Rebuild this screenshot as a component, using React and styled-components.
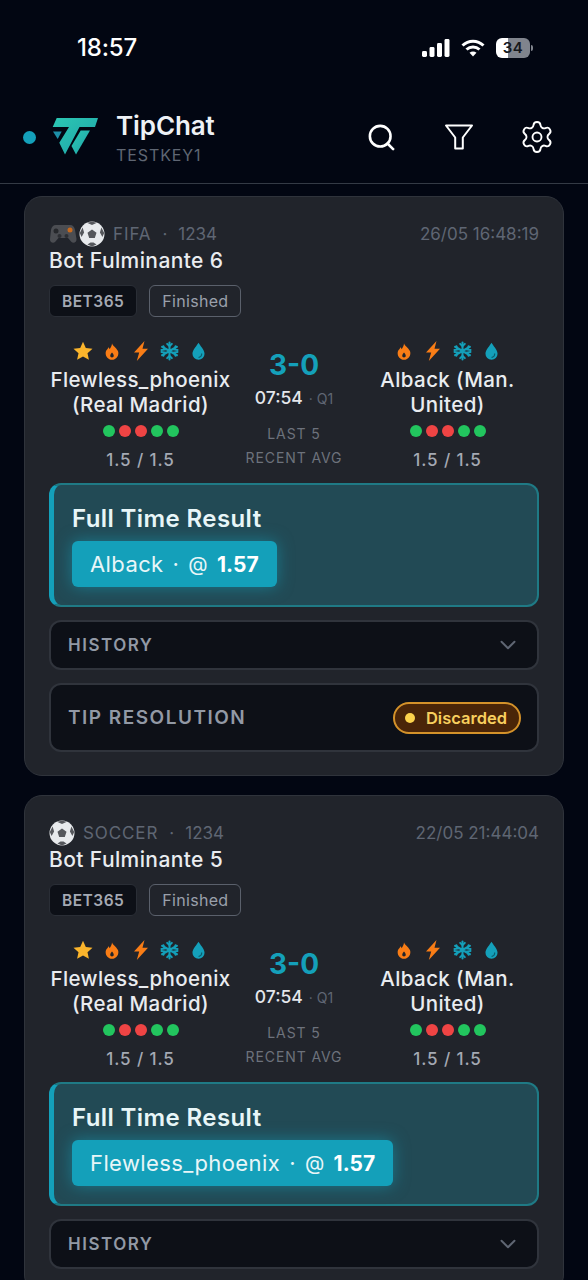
import React from "react";
import styled, { createGlobalStyle } from "styled-components";
import { Search, Settings, ChevronDown } from "lucide-react";

const Global = createGlobalStyle`
  html, body { margin: 0; padding: 0; background: #020617; }
  body { font-family: Inter, "Noto Sans", sans-serif; }
  * { box-sizing: border-box; }
`;

const Screen = styled.div`
  width: 588px;
  height: 1280px;
  overflow: hidden;
  background: #020612;
`;
const StatusBar = styled.div`
  height: 95px;
  padding: 33px 55px 0 77px;
  display: flex;
  justify-content: space-between;
  align-items: flex-start;
`;
const Clock = styled.div`
  font-size: 24px;
  line-height: 29px;
  font-weight: 500;
  color: #fff;
  letter-spacing: -0.2px;
`;
const StatusIcons = styled.div`
  display: flex;
  align-items: center;
  height: 29px;
  gap: 11px;
`;
const Battery = styled.div`
  width: 34px;
  height: 20px;
  border-radius: 6px;
  background: linear-gradient(90deg, #fff 0 36%, #80848d 36%);
  color: #16181d;
  font-size: 15px;
  font-weight: 600;
  display: flex;
  align-items: center;
  justify-content: center;
  letter-spacing: 0.6px;
  position: relative;
  margin-right: 3px;
  &::after {
    content: "";
    position: absolute;
    right: -3px;
    top: 7px;
    width: 2px;
    height: 6px;
    border-radius: 0 2px 2px 0;
    background: #80848d;
  }
`;
const Header = styled.header`
  height: 89px;
  border-bottom: 1px solid #343a45;
  padding: 16px 36px 0 23px;
  display: flex;
  align-items: flex-start;
`;
const LiveDot = styled.span`
  width: 13px;
  height: 13px;
  border-radius: 50%;
  background: #14a0ba;
  margin-top: 20px;
  flex: none;
`;
const LogoWrap = styled.div`
  margin: 6px 0 0 16px;
  flex: none;
  display: flex;
`;
const Brand = styled.div`
  margin-left: 18px;
  flex: 1;
`;
const BrandName = styled.div`
  font-size: 26px;
  line-height: 30px;
  font-weight: 600;
  color: #eef1f5;
  letter-spacing: -0.1px;
`;
const BrandSub = styled.div`
  font-size: 16px;
  line-height: 20px;
  margin-top: 4px;
  color: #5f6673;
  letter-spacing: 0.9px;
`;
const HeaderActions = styled.div`
  display: flex;
  gap: 48px;
  margin-top: 11px;
  color: #fff;
`;
const ActionIcon = styled.span`
  width: 30px;
  height: 30px;
  display: flex;
  align-items: center;
  justify-content: center;
  flex: none;
  & > svg {
    flex: none;
  }
`;
const Feed = styled.main`
  padding: 12px 24px 0;
  display: flex;
  flex-direction: column;
  gap: 19px;
`;
const Card = styled.article`
  background: #21242b;
  border: 1px solid #2f333b;
  border-radius: 18px;
  padding: 23px 24px 23px;
  display: flex;
  flex-direction: column;
`;
const MetaRow = styled.div`
  display: flex;
  justify-content: space-between;
  align-items: center;
  height: 27px;
  font-size: 17px;
  color: #5f6673;
`;
const MetaLeft = styled.div`
  display: flex;
  align-items: center;
`;
const Emojis = styled.span`
  display: flex;
  align-items: center;
  gap: 2px;
  margin-right: 8px;
`;
const Sport = styled.span`
  letter-spacing: 0.9px;
`;
const MetaDot = styled.span`
  margin: 0 11px;
`;
const Title = styled.h2`
  margin: 1px 0 0;
  font-size: 21px;
  line-height: 26px;
  font-weight: 500;
  letter-spacing: 0.4px;
  color: #e9ecf0;
`;
const Tags = styled.div`
  display: flex;
  gap: 12px;
  margin-top: 11px;
`;
const Tag = styled.span`
  height: 32px;
  padding: 0 12px;
  border-radius: 6px;
  display: flex;
  align-items: center;
  font-size: ${(p) => (p.$outlined ? 16 : 15.5)}px;
  font-weight: ${(p) => (p.$outlined ? 400 : 600)};
  letter-spacing: ${(p) => (p.$outlined ? 0.3 : 0.5)}px;
  color: ${(p) => (p.$outlined ? "#9aa0ab" : "#a4a9b3")};
  background: ${(p) => (p.$outlined ? "transparent" : "#0d1017")};
  border: 1.5px solid ${(p) => (p.$outlined ? "#5a606b" : "#2a2e36")};
`;
const Match = styled.div`
  display: grid;
  grid-template-columns: 183px 1fr 183px;
  margin-top: 21px;
  height: 145px;
`;
const Team = styled.div`
  display: flex;
  flex-direction: column;
  align-items: center;
  text-align: center;
`;
const Flags = styled.div`
  display: flex;
  align-items: center;
  height: 26px;
  gap: 9px;
`;
const FlagSlot = styled.span`
  width: 20px;
  height: 20px;
  display: flex;
  align-items: center;
  justify-content: center;
`;
const TeamName = styled.div`
  font-size: 20.5px;
  line-height: 25px;
  font-weight: 500;
  letter-spacing: 0.4px;
  color: #e9ecf0;
  margin-top: 3px;
  white-space: pre-line;
`;
const FormDots = styled.div`
  display: flex;
  gap: 4px;
  margin-top: 8px;
`;
const FormDot = styled.span`
  width: 12px;
  height: 12px;
  border-radius: 50%;
  background: ${(p) => (p.$win ? "#22c55e" : "#ef4444")};
`;
const Avg = styled.div`
  font-size: 17px;
  line-height: 20px;
  font-weight: 500;
  letter-spacing: 0.9px;
  margin-top: 13px;
  color: #a4a9b3;
`;
const Center = styled.div`
  display: flex;
  flex-direction: column;
  align-items: center;
  white-space: nowrap;
`;
const Score = styled.div`
  font-size: 28px;
  line-height: 34px;
  font-weight: 700;
  color: #14a0ba;
  margin-top: 10px;
`;
const MatchTime = styled.div`
  font-size: 17.5px;
  line-height: 22px;
  font-weight: 500;
  color: #e4e7ec;
  margin-top: 5px;
  display: flex;
  align-items: baseline;
`;
const Period = styled.span`
  font-size: 14px;
  font-weight: 400;
  color: #5f6673;
  margin-left: 6px;
`;
const CenterLabels = styled.div`
  margin-top: 12px;
  text-align: center;
`;
const CenterLabel = styled.div`
  font-size: 14px;
  line-height: 24px;
  letter-spacing: 0.9px;
  color: #6d727c;
`;
const Tip = styled.section`
  height: 124px;
  background: #224a55;
  border: 2px solid #1f7a85;
  border-left: 5px solid #14a0ba;
  border-radius: 12px;
  padding: 20px 18px 0;
`;
const TipTitle = styled.div`
  font-size: 24px;
  line-height: 28px;
  font-weight: 600;
  letter-spacing: 0.4px;
  color: #e8f6f8;
`;
const Pick = styled.div`
  display: inline-flex;
  align-items: center;
  height: 46px;
  margin-top: 8px;
  padding: 0 18px;
  border-radius: 6px;
  background: #14a0ba;
  color: #e8f6f8;
  font-size: 22px;
  letter-spacing: 0.4px;
  box-shadow: 0 0 16px rgba(20, 160, 186, 0.55);
`;
const PickDot = styled.span`
  margin: 0 9px;
`;
const At = styled.span`
  font-size: 20px;
`;
const Odds = styled.b`
  font-weight: 700;
  margin-left: 9px;
  color: #fff;
  font-size: 21px;
  letter-spacing: 0;
`;
const Panel = styled.div`
  height: ${(p) => p.$height}px;
  margin-top: 13px;
  background: #0d1017;
  border: 2px solid #30343c;
  border-radius: 12px;
  padding: 0 16px 0 17px;
  display: flex;
  align-items: center;
  justify-content: space-between;
  color: #5f6673;
`;
const PanelLabel = styled.span`
  font-size: ${(p) => p.$size}px;
  font-weight: 600;
  letter-spacing: 1.5px;
  color: #9299a5;
`;
const Chevron = styled(ChevronDown)`
  margin-right: 0;
`;
const Status = styled.span`
  height: 32px;
  padding: 0 12px 0 10px;
  display: flex;
  align-items: center;
  gap: 11px;
  border-radius: 16px;
  background: #4a2508;
  border: 2px solid #d4922a;
  font-size: 16.5px;
  font-weight: 600;
  color: #f8cf5e;
`;
const StatusDot = styled.span`
  width: 10px;
  height: 10px;
  border-radius: 50%;
  background: #fcd34d;
`;

const Logo = () => (
  <svg width="46" height="38" viewBox="0 0 46 38">
    <defs>
      <linearGradient id="lg" x1="0" y1="0" x2="1" y2="1">
        <stop offset="0" stopColor="#2bc7b3" />
        <stop offset="1" stopColor="#1fa3a8" />
      </linearGradient>
    </defs>
    <path fill="url(#lg)" d="M4.700 1H46l-3 9H27.500L13 37.500 7.300 25.700 17 10H.7z" />
    <path fill="#1d8fa8" d="M1 14.500h8.700L5.700 22z" />
    <path fill="url(#lg)" d="M28.700 13.500H38L24 37.500 19.500 29z" />
  </svg>
);

const Signal = () => (
  <svg width="28" height="18" viewBox="0 0 28 18" fill="#fff">
    <rect x="0" y="12" width="5" height="6" rx="1.4" />
    <rect x="7.500" y="8" width="5" height="10" rx="1.4" />
    <rect x="15" y="4" width="5" height="14" rx="1.4" />
    <rect x="22.500" y="0" width="5" height="18" rx="1.4" />
  </svg>
);
const Wifi = () => (
  <svg width="24" height="18" viewBox="0 0 24 18" fill="none" stroke="#fff" strokeWidth="3">
    <path d="M1.500 6.500C7.500 .7 16.500 .7 22.500 6.500" />
    <path d="M5.500 10.500c3.800-3.500 9.200-3.500 13 0" />
    <path d="M12 17.500l-3.500-3.700c2-1.700 5-1.700 7 0z" fill="#fff" stroke="none" />
  </svg>
);
const FunnelOutline = () => (
  <svg width="30" height="26" viewBox="0 0 30 26" fill="none" stroke="currentColor" strokeWidth="2" strokeLinejoin="round">
    <path d="M2 1.500h26L18.800 13.500V24.500h-7.600V13.500z" />
  </svg>
);
const Controller = () => (
  <svg width="28" height="24" viewBox="0 0 28 24">
    <path fill="#4b4d52" d="M7 3h14c3 0 4.500 2 5 5l1.500 9c.4 3-3 5-5 3l-3.500-4H9.500L6 20c-2 2-5.400 0-5-3L2 8c.5-3 2-5 5-5z" />
    <circle cx="7" cy="9" r="2.500" fill="#26282c" />
    <circle cx="21" cy="8" r="2.500" fill="#c76a1e" />
    <circle cx="10.500" cy="14" r="2" fill="#2c2e33" />
    <circle cx="17.500" cy="14" r="2" fill="#2c2e33" />
  </svg>
);
const Ball = () => (
  <svg width="26" height="26" viewBox="0 0 26 26">
    <circle cx="13" cy="13" r="12.500" fill="#e8eaed" />
    <path fill="#55575c" d="M13 8.500l4.500 3.200-1.700 5.300h-5.600l-1.700-5.300zM8 1.800l5-1 5 1-5 2.200zM.8 12l2.800-5.500 1.500 5-2.500 4.500zM25.200 12l-2.800-5.500-1.500 5 2.500 4.500zM8.500 23.500l3-2h3l3 2-4.500 2z" />
  </svg>
);
const Star = () => (
  <svg width="20" height="20" viewBox="0 0 20 20"><path fill="#fbb52c" d="M10 .8l2.800 6.200 6.700.7-5 4.500 1.400 6.600L10 15.400l-5.900 3.400 1.400-6.600-5-4.500 6.700-.7z" /></svg>
);
const Flame = () => (
  <svg width="14" height="19" viewBox="0 0 16 20">
    <path fill="#f97d16" fillRule="evenodd" d="M8 .5c.5 3 5 5 6.800 9 1.700 4.500-1.500 10-6.800 10S-.5 14 1.200 9.500C2 7.500 3.500 7 4 5c.8.500 1 1.500 1.200 2.300C6.500 5.500 8 3.500 8 .5zM8 11c-1 1.300-2 2.300-2 3.800 0 1.200.9 2 2 2s2-.8 2-2C10 13.300 9 12.300 8 11z" />
  </svg>
);
const Bolt = () => (
  <svg width="16" height="20" viewBox="0 0 16 20"><path fill="#f97d16" d="M11.500 0L1 11.500h5.200L3.800 20 15 7.800H9.500z" /></svg>
);
const Snow = () => (
  <svg width="19" height="20" viewBox="0 0 20 20" fill="none" stroke="#14a0ba" strokeLinecap="round">
    <path d="M10 1v18M2.200 5.500l15.600 9M17.800 5.500l-15.600 9" strokeWidth="2.200" />
    <path d="M7.500 2.500L10 5l2.500-2.500M7.500 17.500L10 15l2.500 2.500M1.500 9l3.500-.5L3.700 5M18.500 9L15 8.500 16.300 5M1.500 11l3.500.5L3.700 15M18.500 11L15 11.500 16.300 15" strokeWidth="2" />
  </svg>
);
const Drop = () => (
  <svg width="13" height="19" viewBox="0 0 14 20">
    <path fill="#14a0ba" d="M7 .5c1.500 3 6.500 7.500 6.500 12a6.500 6.500 0 0 1-13 0C.5 8 5.500 3.500 7 .5z" />
    <path fill="none" stroke="#0b5e6f" strokeWidth="1.200" strokeLinecap="round" d="M10.500 12.500c0 2-1.300 3.500-3 3.800" />
  </svg>
);

const formHistory = [true, false, false, true, true];

const TeamBlock = ({ name, star }) => (
  <Team>
    <Flags>
      {star && <FlagSlot><Star /></FlagSlot>}
      <FlagSlot><Flame /></FlagSlot>
      <FlagSlot><Bolt /></FlagSlot>
      <FlagSlot><Snow /></FlagSlot>
      <FlagSlot><Drop /></FlagSlot>
    </Flags>
    <TeamName>{name}</TeamName>
    <FormDots>
      {formHistory.map((w, i) => (
        <FormDot key={i} $win={w} />
      ))}
    </FormDots>
    <Avg>1.5 / 1.5</Avg>
  </Team>
);

const cards = [
  { emojis: [<Controller key="c" />, <Ball key="b" />], sport: "FIFA", date: "26/05 16:48:19", title: "Bot Fulminante 6", pick: "Alback", resolved: true },
  { emojis: [<Ball key="b" />], sport: "SOCCER", date: "22/05 21:44:04", title: "Bot Fulminante 5", pick: "Flewless_phoenix", resolved: false },
];

export default function App() {
  return (
    <Screen>
      <Global />
      <StatusBar>
        <Clock>18:57</Clock>
        <StatusIcons>
          <Signal />
          <Wifi />
          <Battery>34</Battery>
        </StatusIcons>
      </StatusBar>
      <Header>
        <LiveDot />
        <LogoWrap><Logo /></LogoWrap>
        <Brand>
          <BrandName>TipChat</BrandName>
          <BrandSub>TESTKEY1</BrandSub>
        </Brand>
        <HeaderActions>
          <ActionIcon><Search size={31} strokeWidth={2} /></ActionIcon>
          <ActionIcon><FunnelOutline /></ActionIcon>
          <ActionIcon><Settings size={36} strokeWidth={1.25} /></ActionIcon>
        </HeaderActions>
      </Header>
      <Feed>
        {cards.map((c) => (
          <Card key={c.title}>
            <MetaRow>
              <MetaLeft>
                <Emojis>{c.emojis}</Emojis>
                <Sport>{c.sport}</Sport>
                <MetaDot>·</MetaDot>
                1234
              </MetaLeft>
              <span>{c.date}</span>
            </MetaRow>
            <Title>{c.title}</Title>
            <Tags>
              <Tag>BET365</Tag>
              <Tag $outlined>Finished</Tag>
            </Tags>
            <Match>
              <TeamBlock name={"Flewless_phoenix\n(Real Madrid)"} star />
              <Center>
                <Score>3-0</Score>
                <MatchTime>07:54<Period>· Q1</Period></MatchTime>
                <CenterLabels>
                  <CenterLabel>LAST 5</CenterLabel>
                  <CenterLabel>RECENT AVG</CenterLabel>
                </CenterLabels>
              </Center>
              <TeamBlock name={"Alback (Man.\nUnited)"} />
            </Match>
            <Tip>
              <TipTitle>Full Time Result</TipTitle>
              <Pick>
                {c.pick}
                <PickDot>·</PickDot>
                <At>@</At>
                <Odds>1.57</Odds>
              </Pick>
            </Tip>
            <Panel $height={50}>
              <PanelLabel $size={17}>HISTORY</PanelLabel>
              <Chevron size={26} strokeWidth={1.8} />
            </Panel>
            {c.resolved && (
              <Panel $height={69}>
                <PanelLabel $size={19}>TIP RESOLUTION</PanelLabel>
                <Status><StatusDot />Discarded</Status>
              </Panel>
            )}
          </Card>
        ))}
      </Feed>
    </Screen>
  );
}
